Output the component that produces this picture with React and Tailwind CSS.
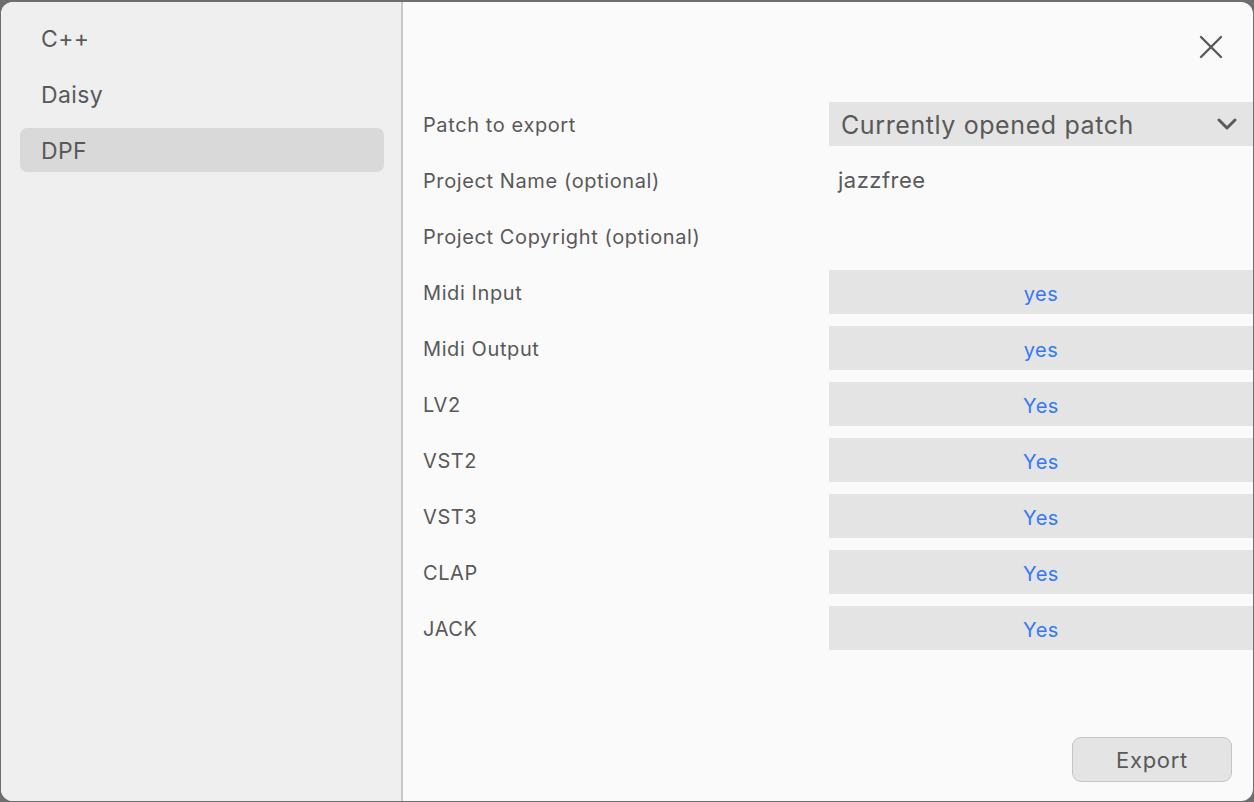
import React from "react";

const rows = [
  { label: "Midi Input", value: "yes" },
  { label: "Midi Output", value: "yes" },
  { label: "LV2", value: "Yes" },
  { label: "VST2", value: "Yes" },
  { label: "VST3", value: "Yes" },
  { label: "CLAP", value: "Yes" },
  { label: "JACK", value: "Yes" },
];

export default function App() {
  const font = { fontFamily: "Inter, 'Noto Sans', sans-serif" };
  return (
    <div className="w-[1254px] h-[802px] bg-[#6e6e6e] pt-[2px] px-[1px] pb-[1px]" style={font}>
      <div className="w-full h-full rounded-[12px] overflow-hidden flex bg-[#fafafa]">
        <div className="w-[400px] h-full bg-[#efefef] pt-[14px] pl-[19px] pr-[17px] flex flex-col gap-[12px] shrink-0">
          {["C++", "Daisy", "DPF"].map((t) => (
            <div
              key={t}
              className={`h-[44px] rounded-[7px] pl-[21px] pt-[2px] flex items-center text-[23px] tracking-[0.4px] text-[#595959] ${t === "DPF" ? "bg-[#d9d9d9]" : ""}`}
            >
              {t}
            </div>
          ))}
        </div>
        <div className="w-[2px] h-full bg-[#c8c8c8] shrink-0" />
        <div className="flex-1 h-full flex flex-col pl-[20px]">
          <div className="h-[100px] flex items-start justify-end pt-[33px] pr-[30px]">
            <svg width="24" height="24" viewBox="0 0 24 24" className="text-[#5a5a5a]">
              <path d="M2 2 L22 22 M22 2 L2 22" stroke="currentColor" strokeWidth="2.4" strokeLinecap="round" fill="none" />
            </svg>
          </div>
          <div className="grid grid-cols-[406px_1fr] auto-rows-[44px] gap-y-[12px]">
            <div className="flex items-center pt-[1px] text-[20px] tracking-[0.6px] text-[#595959]">Patch to export</div>
            <div className="bg-[#e4e4e4] flex items-center justify-between pl-[12px] pr-[16px] text-[25px] tracking-[0.6px] text-[#595959]">
              <span className="pt-[3px]">Currently opened patch</span>
              <svg width="20" height="14" viewBox="0 0 20 14">
                <path d="M2 3 L10 11 L18 3" stroke="#5a5a5a" strokeWidth="3" fill="none" strokeLinecap="round" strokeLinejoin="round" />
              </svg>
            </div>
            <div className="flex items-center pt-[1px] text-[20px] tracking-[0.6px] text-[#595959]">Project Name (optional)</div>
            <div className="flex items-center pl-[9px] pt-[1px] text-[22px] tracking-[0.5px] text-[#595959]">jazzfree</div>
            <div className="flex items-center pt-[1px] text-[20px] tracking-[0.6px] text-[#595959]">Project Copyright (optional)</div>
            <div />
            {rows.map((r) => (
              <React.Fragment key={r.label}>
                <div className="flex items-center pt-[1px] text-[20px] tracking-[0.6px] text-[#595959]">{r.label}</div>
                <div className="bg-[#e4e4e4] flex items-center justify-center pt-[4px] text-[20px] tracking-[0.5px] text-[#3478f6]">{r.value}</div>
              </React.Fragment>
            ))}
          </div>
          <div className="flex-1" />
          <div className="flex justify-end pr-[21px] pb-[19px]">
            <div className="w-[160px] h-[45px] rounded-[9px] bg-[#e4e4e4] border border-[#c4c4c4] flex items-center justify-center pt-[1px] text-[22px] tracking-[0.7px] text-[#595959]">
              Export
            </div>
          </div>
        </div>
      </div>
    </div>
  );
}
